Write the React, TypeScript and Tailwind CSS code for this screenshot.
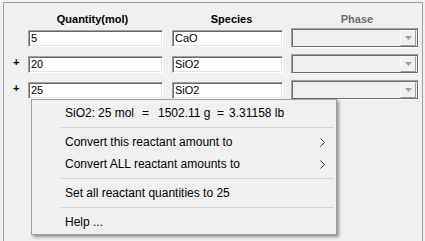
import { ReactNode } from "react";

const menuFont = "font-['Liberation_Sans',Arial,sans-serif]";
const winFont = "font-['Liberation_Sans',Arial,sans-serif]";

function TextBox({ value, width }: { value: string; width: string }) {
  return (
    <div
      className={`${width} h-[17px] mt-[2px] flex items-center pl-[2px] bg-white border border-t-[#a0a0a0] border-l-[#a0a0a0] border-b-white border-r-white shadow-[inset_1px_1px_0_#696969,inset_-1px_-1px_0_#e3e3e3] text-[11px] leading-none text-black`}
    >
      {value}
    </div>
  );
}

function PhaseBox() {
  return (
    <div className="w-[128px] h-[20px] flex justify-end items-center pr-[2px] bg-[#f0f0f0] border border-t-[#a0a0a0] border-l-[#a0a0a0] border-b-white border-r-white shadow-[inset_0_0_0_1px_#6d6d6d]">
      {/* disabled drop-down arrow */}
      <div className="w-[16px] h-[16px] flex items-center justify-center bg-[#f0f0f0] border border-t-[#f7f7f7] border-l-[#f7f7f7] border-b-[#a0a0a0] border-r-[#a0a0a0]">
        <svg width="7" height="4" viewBox="0 0 7 4">
          <path d="M0 0 H7 L3.5 4 Z" fill="#a0a0a0" />
        </svg>
      </div>
    </div>
  );
}

function Row({ plus, qty, species }: { plus: boolean; qty: string; species: string }) {
  return (
    <div className="flex items-start h-[20px]">
      <div className="w-[24px] pl-[9px] pt-[3px] text-[11px] font-bold leading-none text-black">{plus ? "+" : ""}</div>
      <TextBox value={qty} width="w-[135px]" />
      <div className="w-[9px]" />
      <TextBox value={species} width="w-[111px]" />
      <div className="w-[8px]" />
      <PhaseBox />
    </div>
  );
}

function MenuItem({ children, sub }: { children: ReactNode; sub?: boolean }) {
  return (
    <div className="h-[22px] flex items-center justify-between pl-[33px] pr-[11px] whitespace-pre">
      <span className="flex">{children}</span>
      {sub && (
        <svg width="5" height="9" viewBox="0 0 5 9">
          <path d="M0.5 0.5 L4.5 4.5 L0.5 8.5" fill="none" stroke="#333" strokeWidth="1" />
        </svg>
      )}
    </div>
  );
}

function Separator() {
  return (
    <div className="h-[7px] pt-[3px] pl-[29px] pr-[2px]">
      <div className="h-px bg-[#d4d4d4]" />
    </div>
  );
}

export default function App() {
  return (
    <div className={`relative w-[425px] h-[241px] overflow-hidden bg-[#f0f0f0] ${winFont}`}>
      <div className="pt-[2px] pl-[3px] pr-[2px]">
        <div className="h-[239px] border-t border-l border-r border-[#a0a0a0] pt-[9px]">
          {/* column headers */}
          <div className="flex h-[14px] text-[11px] font-bold leading-[14px]">
            <div className="w-[24px]" />
            <div className="w-[135px] text-center pr-[6px] text-black">Quantity(mol)</div>
            <div className="w-[9px]" />
            <div className="w-[111px] text-center pl-[8px] text-black">Species</div>
            <div className="w-[8px]" />
            <div className="w-[128px] text-center pl-[4px] text-[#6d6d6d]">Phase</div>
          </div>

          <div className="mt-[2px] flex flex-col gap-[6px]">
            <Row plus={false} qty="5" species="CaO" />
            <Row plus qty="20" species="SiO2" />
            <Row plus qty="25" species="SiO2" />
          </div>
        </div>
      </div>

      {/* context menu */}
      <div
        className={`absolute left-[31px] top-[99px] w-[306px] pt-[2px] pb-[1px] bg-[#f0f0f0] border border-[#a0a0a0] shadow-[2px_2px_3px_rgba(0,0,0,0.4)] text-[12px] text-black ${menuFont}`}
      >
        <MenuItem>
          <span className="w-[33px]">SiO2:</span>
          <span className="w-[44px]">25 mol</span>
          <span className="w-[16px]">=</span>
          <span className="w-[59px]">1502.11 g</span>
          <span className="w-[12px]">=</span>
          <span>3.31158 lb</span>
        </MenuItem>
        <Separator />
        <MenuItem sub>Convert this reactant amount to</MenuItem>
        <MenuItem sub>Convert ALL reactant amounts to</MenuItem>
        <Separator />
        <MenuItem>Set all reactant quantities to 25</MenuItem>
        <Separator />
        <MenuItem>Help ...</MenuItem>
      </div>
    </div>
  );
}
